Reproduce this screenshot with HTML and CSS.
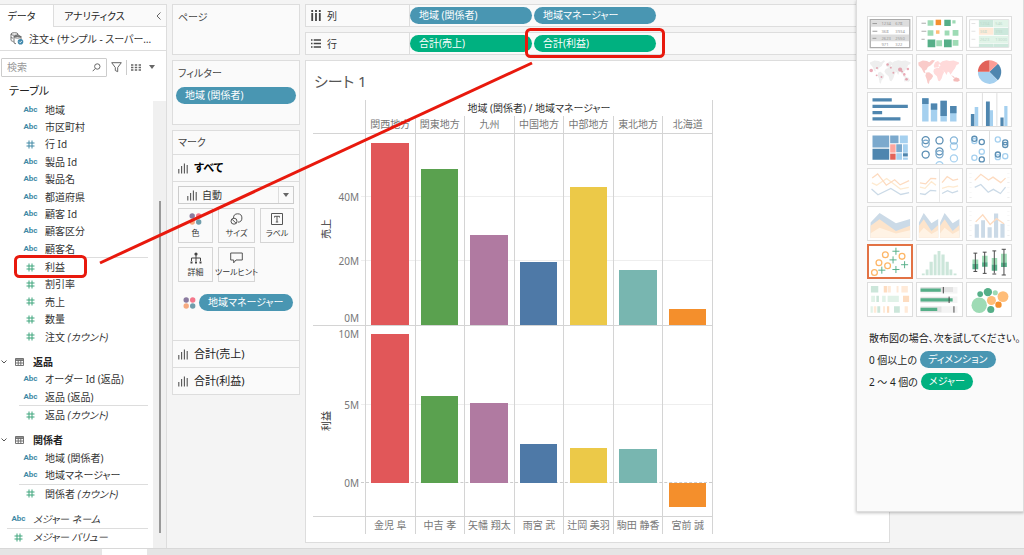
FILE: index.html
```html
<!DOCTYPE html>
<html lang="ja">
<head>
<meta charset="utf-8">
<title>シート 1</title>
<link rel="stylesheet" href="styles.css">
</head>
<body>
<svg class="defs" aria-hidden="true">
  <symbol id="hash" viewBox="0 0 9 9"><path d="M3 .5v8M6 .5v8M.5 3h8M.5 6h8" fill="none" stroke="currentColor"/></symbol>
  <symbol id="bars" viewBox="0 0 10 11"><path d="M.8 6v4.500M3.600 3v7.500M6.400 .5v10M9.200 2v8.500" fill="none" stroke="currentColor" stroke-width="1.100"/></symbol>
  <symbol id="table" viewBox="0 0 9 8"><path d="M.5 .5h8v7h-8zM.5 2.500h8M.5 5h8M3.200 2v5.500M5.800 2v5.500M.5 1.300h8" fill="none" stroke="currentColor" stroke-width=".9"/></symbol>
  <symbol id="chev" viewBox="0 0 6 4"><path d="M.5 .5L3 3 5.500 .5" fill="none" stroke="currentColor"/></symbol>
  <symbol id="dots" viewBox="0 0 13 12"><circle cx="3.200" cy="3" r="2.700" fill="#8a7a9f"/><circle cx="9.700" cy="3" r="2.700" fill="#f4778b"/><circle cx="3.200" cy="9" r="2.700" fill="#f6aa80"/><circle cx="9.700" cy="9" r="2.700" fill="#6f9dab"/></symbol>
</svg>

<div class="toolbar-edge"></div>
<div class="app">
  <aside class="data-pane">
    <div class="tabs" role="tablist">
      <button class="tab tab-active" role="tab" aria-selected="true">データ</button>
      <button class="tab tab-second" role="tab" aria-selected="false">アナリティクス</button>
      <button class="collapse" aria-label="折りたたむ"><svg width="5" height="8" viewBox="0 0 5 8"><path d="M4.500 .5L1 4l3.500 3.500" fill="none" stroke="#666"/></svg></button>
    </div>
    <div class="source">
      <svg width="14" height="13" viewBox="0 0 14 13" fill="none" stroke="#666" stroke-width=".9"><ellipse cx="4.500" cy="2" rx="3.500" ry="1.300"/><path d="M1 2v6c0 .8 1 1.300 2.500 1.400M8 2v1.500M1 5c0 .6 1 1 2 1.100"/><path d="M4 4.500h7v4M4 4.500v6.500l2 .8"/><ellipse cx="7.500" cy="4.800" rx="3.500" ry="1.300"/><circle cx="10.500" cy="9.700" r="2.800" fill="#4189ad" stroke="none"/><path d="M9.200 9.700l1 1 1.600-1.800" stroke="#fff"/></svg>
      <span>注文+ (サンプル - スーパー…</span>
    </div>
    <div class="search-row">
      <label class="search"><input type="text" placeholder="検索" aria-label="検索"><svg width="9" height="9" viewBox="0 0 9 9" fill="none" stroke="#666"><circle cx="5.300" cy="3.500" r="2.700"/><path d="M3.300 5.500L.7 8.200"/></svg></label>
      <svg width="11" height="11" viewBox="0 0 11 11" fill="none" stroke="#666"><path d="M.7 .7h9.600L6.700 5.500v4.200l-2.400-1.200v-3z"/></svg>
      <i class="divider"></i>
      <svg class="view-icon" width="10" height="7" viewBox="0 0 10 7" stroke="#666" stroke-width="1.400" stroke-dasharray="2.400 1.400"><path d="M0 1h10M0 3.500h10M0 6h10"/></svg>
      <svg width="6" height="4" viewBox="0 0 6 4"><path d="M0 0h6L3 4z" fill="#666"/></svg>
    </div>
    <h2 class="tables-title">テーブル</h2>
    <div class="tree-wrap">
      <ul class="tree">
        <li><b class="abc">Abc</b>地域</li>
        <li><b class="abc">Abc</b>市区町村</li>
        <li><svg class="hash dim"><use href="#hash"/></svg>行 Id</li>
        <li><b class="abc">Abc</b>製品 Id</li>
        <li><b class="abc">Abc</b>製品名</li>
        <li><b class="abc">Abc</b>都道府県</li>
        <li><b class="abc">Abc</b>顧客 Id</li>
        <li><b class="abc">Abc</b>顧客区分</li>
        <li><b class="abc">Abc</b>顧客名</li>
        <li class="rule"><svg class="hash"><use href="#hash"/></svg>利益</li>
        <li><svg class="hash"><use href="#hash"/></svg>割引率</li>
        <li><svg class="hash"><use href="#hash"/></svg>売上</li>
        <li><svg class="hash"><use href="#hash"/></svg>数量</li>
        <li><svg class="hash"><use href="#hash"/></svg><span>注文 <em>(カウント)</em></span></li>
        <li class="group"><svg class="chev"><use href="#chev"/></svg><svg class="tbl"><use href="#table"/></svg>返品</li>
        <li><b class="abc">Abc</b>オーダー Id (返品)</li>
        <li><b class="abc">Abc</b>返品 (返品)</li>
        <li class="rule"><svg class="hash"><use href="#hash"/></svg><span>返品 <em>(カウント)</em></span></li>
        <li class="group"><svg class="chev"><use href="#chev"/></svg><svg class="tbl"><use href="#table"/></svg>関係者</li>
        <li><b class="abc">Abc</b>地域 (関係者)</li>
        <li><b class="abc">Abc</b>地域マネージャー</li>
        <li class="rule"><svg class="hash"><use href="#hash"/></svg><span>関係者 <em>(カウント)</em></span></li>
        <li class="top first-top"><b class="abc">Abc</b><em>メジャー ネーム</em></li>
        <li class="top rule"><svg class="hash"><use href="#hash"/></svg><em>メジャー バリュー</em></li>
      </ul>
      <div class="scroll"><i></i></div>
    </div>
  </aside>

  <section class="cards">
    <div class="card pages"><h3>ページ</h3></div>
    <div class="card filters"><h3>フィルター</h3><span class="pill dim-pill">地域 (関係者)</span></div>
    <div class="card marks">
      <h3>マーク</h3>
      <div class="mark-head all"><svg class="bars"><use href="#bars"/></svg>すべて</div>
      <div class="mark-body">
        <button class="mark-type"><svg class="bars"><use href="#bars"/></svg><span>自動</span><i><svg width="6" height="4" viewBox="0 0 6 4"><path d="M0 0h6L3 4z" fill="#666"/></svg></i></button>
        <div class="mark-grid">
          <button><svg width="13" height="12"><use href="#dots"/></svg>色</button>
          <button><svg width="13" height="12" viewBox="0 0 13 12" fill="none" stroke="#555"><path d="M3.500 5a4.200 4.200 0 1 1 4.300 4.200"/><circle cx="4" cy="8.200" r="3"/><path d="M2 6.200l4 4"/></svg>サイズ</button>
          <button><svg width="12" height="12" viewBox="0 0 12 12" fill="none" stroke="#555"><path d="M.5 .5h11v11H.5zM3.500 4.500v-1.200h5v1.200M6 3.300v5.700M4.800 9h2.400"/></svg>ラベル</button>
          <button><svg width="12" height="12" viewBox="0 0 12 12" fill="none" stroke="#444"><circle cx="6" cy="2" r="1.600" fill="#444" stroke="none"/><path d="M6 3v6M1.500 9V6h9v3"/><path d="M.5 10.500h2M5 10.500h2M9.500 10.500h2" stroke-width="2"/></svg>詳細</button>
          <button><svg width="13" height="12" viewBox="0 0 13 12" fill="none" stroke="#555"><path d="M.7 1h11.600v7H6l-2.300 2.800V8h-3z"/></svg><span>ツールヒント</span></button>
        </div>
        <div class="color-row"><svg width="13" height="12"><use href="#dots"/></svg><span class="pill dim-pill">地域マネージャー</span></div>
      </div>
      <div class="mark-head"><svg class="bars"><use href="#bars"/></svg>合計(売上)</div>
      <div class="mark-head"><svg class="bars"><use href="#bars"/></svg>合計(利益)</div>
    </div>
  </section>

  <main class="work">
    <div class="shelf">
      <div class="shelf-label"><svg width="10" height="11" viewBox="0 0 10 11" fill="none" stroke="#444" stroke-width="1.800"><path d="M1.200 0v2M5 0v2M8.800 0v2M1.200 3v8M5 3v8M8.800 3v8"/></svg>列</div>
      <div class="shelf-pills"><span class="pill dim-pill">地域 (関係者)</span><span class="pill dim-pill">地域マネージャー</span></div>
    </div>
    <div class="shelf">
      <div class="shelf-label"><svg width="10" height="9" viewBox="0 0 10 9" fill="none" stroke="#444" stroke-width="1.500"><path d="M0 1h1.500M0 4.500h1.500M0 8h1.500M2.700 1H10M2.700 4.500H10M2.700 8H10"/></svg>行</div>
      <div class="shelf-pills"><span class="pill mea-pill">合計(売上)</span><span class="pill mea-pill">合計(利益)</span></div>
    </div>
    <div class="sheet">
      <h1>シート 1</h1>
      <div class="chart">
        <div class="row head-title"><span></span><div>地域 (関係者) / 地域マネージャー</div></div>
        <div class="row head"><span></span><span>関西地方</span><span>関東地方</span><span>九州</span><span>中国地方</span><span>中部地方</span><span>東北地方</span><span>北海道</span></div>
        <div class="row pane">
          <div class="axis"><span class="axis-title">売上</span><span class="tick" style="bottom:67%">40M</span><span class="tick" style="bottom:33.500%">20M</span><span class="tick tick-min">0M</span></div>
          <i class="grid-line" style="bottom:67%"></i><i class="grid-line" style="bottom:33.500%"></i>
          <div class="cell"><b class="bar red" style="bottom:0;height:95.500%"></b></div>
          <div class="cell"><b class="bar green" style="bottom:0;height:81.500%"></b></div>
          <div class="cell"><b class="bar purple" style="bottom:0;height:47%"></b></div>
          <div class="cell"><b class="bar blue" style="bottom:0;height:33%"></b></div>
          <div class="cell"><b class="bar yellow" style="bottom:0;height:72%"></b></div>
          <div class="cell"><b class="bar teal" style="bottom:0;height:28.500%"></b></div>
          <div class="cell"><b class="bar orange" style="bottom:0;height:8%"></b></div>
        </div>
        <div class="row pane">
          <div class="axis"><span class="axis-title">利益</span><span class="tick tick-max">10M</span><span class="tick" style="bottom:58.500%">5M</span><span class="tick" style="bottom:17.200%">0M</span></div>
          <i class="grid-line" style="bottom:58.500%"></i><i class="grid-line zero" style="bottom:17.200%"></i>
          <div class="cell"><b class="bar red" style="bottom:17.200%;height:78.500%"></b></div>
          <div class="cell"><b class="bar green" style="bottom:17.200%;height:46%"></b></div>
          <div class="cell"><b class="bar purple" style="bottom:17.200%;height:42%"></b></div>
          <div class="cell"><b class="bar blue" style="bottom:17.200%;height:20.500%"></b></div>
          <div class="cell"><b class="bar yellow" style="bottom:17.200%;height:18.700%"></b></div>
          <div class="cell"><b class="bar teal" style="bottom:17.200%;height:18.200%"></b></div>
          <div class="cell"><b class="bar orange" style="bottom:4.700%;height:12.500%"></b></div>
        </div>
        <div class="row foot"><span></span><span>金児 阜</span><span>中吉 孝</span><span>矢幡 翔太</span><span>雨宮 武</span><span>辻岡 美羽</span><span>駒田 静香</span><span>宮前 誠</span></div>
      </div>
    </div>
  </main>
</div>
<div class="bottom-bar"><i></i></div>

<aside class="show-me">
  <div class="thumbs">
    <button aria-label="テキスト表"><svg viewBox="37 50 138 102"><path fill="#fff" stroke="#aaa" stroke-width="4" d="M44 58h123v87H44z"/><path fill="#ddd" d="M46 60h119v20H46zM46 104h119v21H46z"/><path stroke="#999" stroke-width="3" d="M51 70h14M51 94h15M51 116h12"/><g class="mini-num"><text x="79" y="75">1234</text><text x="122" y="75">678</text><text x="79" y="98">368</text><text x="122" y="98">3934</text><text x="79" y="120">2623</text><text x="122" y="120">2550</text><text x="79" y="140">971</text><text x="122" y="140">322</text></g></svg></button>
    <button aria-label="ハイライト表"><svg viewBox="186 50 138 102"><path stroke="#aaa" stroke-width="3" d="M200 69h14M200 94h15M200 119h10"/><path fill="#55af88" d="M271 58h20v20h-20zM219 120h24v24h-24zM270 120h24v24h-24z"/><path fill="#9edbb5" d="M219 60h18v17h-18zM296 60h10v10h-10zM219 91h18v17h-18zM272 92h15v15h-15zM297 90h18v18h-18zM246 122h18v19h-18zM297 121h18v18h-18z"/><path fill="#f4902e" d="M244 58h17v17h-17z"/><path fill="#ffbd78" d="M245 91h11v11h-11z"/></svg></button>
    <button aria-label="ヒートマップ"><svg viewBox="334 50 138 102"><path fill="#fff" stroke="#ddd" stroke-width="3" d="M342 58h122v86H342z"/><path fill="#cce8dc" d="M371 59h45v22h-45zM417 83h46v23h-46zM371 133h45v10h-45zM417 133h46v10h-46z"/><path fill="#e1f4e8" d="M417 59h46v22h-46zM371 108h92v23h-92z"/><path fill="#ffead8" d="M371 83h45v22h-45z"/><path stroke="#e2e2e2" stroke-width="3" d="M348 70h12M348 94h12M348 119h12"/><g class="mini-num faint"><text x="374" y="74">1234</text><text x="422" y="74">546</text><text x="374" y="98">368</text><text x="422" y="98">393</text><text x="374" y="123">2623</text><text x="422" y="123">13000</text></g></svg></button>

    <button aria-label="記号マップ"><svg viewBox="37 164 138 102"><g fill="#eee"><path id="world" d="M43 187l14-6 13 1 7 4 9-6 4 3-7 7-3 8-8 5-4 8-3-4-6 1 3 7-6-3-5-12-8-9zM69 218l7-2 8 7 4 5-3 8-6 7-2 10-4-3-2-13-4-10zM93 197l5-9 8-5 6 3 4 6-8 4 3 5-5 2-9-1zM92 207l10-4 12 2 5 8 5 3-5 10-3 10-6 9-5-1-4-14-8-7-5-8zM110 190l9-7 13-3 9 2 13-1 16 6-1 5-7 3-5 11-5 6-5 8-4 5-3-7-5-3-4 11-5-9-6-5-5 2-5-6-3-7 5-4zM147 226l6 3 6 5-5 1-7-4zM149 238l6-4 8 0 5 8-4 5-7-2-7 1zM172 243l2 2-3 4z"/></g><g fill="#dc7185" fill-opacity=".6"><circle cx="47" cy="212" r="5.500"/><circle cx="65" cy="204" r="3"/><circle cx="64" cy="227" r="3"/><circle cx="79" cy="232" r="3"/><circle cx="98" cy="193" r="4"/><circle cx="108" cy="203" r="3"/><circle cx="116" cy="219" r="3"/><circle cx="137" cy="209" r="6.500"/><circle cx="143" cy="215" r="3"/><circle cx="150" cy="224" r="4"/><circle cx="157" cy="239" r="4"/><circle cx="161" cy="207" r="4"/></g></svg></button>
    <button aria-label="マップ"><svg viewBox="186 164 138 102"><g fill="#f9cbc9"><path d="M190 187l14-6 13 1 7 4 9-7 9 2-9 11-5 4-8 5-4 8-6 4 3 8-6-3-7-13-9-9zM215 218l9-1 10 8 2 5-5 8-6 6-2 10-4-3-3-13-4-10z"/></g><g fill="#ffdada"><path d="M238 197l4-10 8-5 5 3 3 6-6 4 4 4-6 3-10 1zM239 207l10-4 12 2 5 8 5 3-5 10-3 10-6 9-5-1-4-14-8-7-3-8zM256 190l9-7 13-3 9 2 13-1 17 6-1 5-7 3-5 11-5 6-5 8-4 5-3-7-5-3-4 11-5-9-6-5-5 2-5-6-3-7 5-4z"/></g><path d="M292 226l12 7-3 2zM299 239l8-6 10 4 2 7-7 3-12-2z" fill="#f4bbb9"/></svg></button>
    <button aria-label="円グラフ"><svg viewBox="334 164 138 102"><path fill="#a5d0ef" d="M404 216l25 27a36 36 0 0 1-61-27z"/><path fill="#4f86af" d="M404 216l26-25a36 36 0 0 1 0 51z"/><path fill="#fc9d96" d="M404 216v-36a36 36 0 0 1 26 11z"/><path fill="#e26259" d="M404 216h-36a36 36 0 0 1 36-36z"/></svg></button>

    <button aria-label="横棒"><svg viewBox="37 278 138 102"><path fill="#4f86af" d="M51 294h60v10H51zM51 314h110v10H51zM51 334h30v10H51zM51 353h87v10H51z"/></svg></button>
    <button aria-label="積み上げ棒"><svg viewBox="186 278 138 102"><path fill="#a5d0ef" d="M202 294h20v72h-20zM229 310h20v56h-20zM259 302h20v64h-20zM289 318h20v48h-20z"/><path fill="#4f86af" d="M202 294h20v18h-20zM229 310h20v20h-20zM259 302h20v47h-20zM289 318h20v23h-20z"/></svg></button>
    <button aria-label="並列棒"><svg viewBox="334 278 138 102"><path stroke="#ccc" stroke-width="2" d="M382 278v102M427 278v102"/><path fill="#a5d0ef" d="M358 321h11v59h-11zM405 331h10v49h-10zM450 318h10v62h-10z"/><path fill="#4f86af" d="M346 343h11v37h-11zM393 304h12v76h-12zM438 354h10v26h-10z"/></svg></button>

    <button aria-label="ツリーマップ"><svg viewBox="37 16 138 102"><path fill="#7ba9cd" d="M51 30h52v37H51zM106 30h26v24h-26zM125 57h18v25h-18z"/><path fill="#4f86af" d="M51 71h52v34H51zM146 85h15v10h-15z"/><path fill="#a5d0ef" d="M136 30h25v24h-25zM146 57h15v26h-15zM125 85h18v20h-18zM146 98h15v7h-15z"/><path fill="#ffa69e" d="M106 57h17v26h-17z"/><path fill="#e26259" d="M106 86h17v19h-17z"/></svg></button>
    <button aria-label="円ビュー"><svg viewBox="186 16 138 102" fill="none" stroke="#5c8fb4" stroke-width="4"><circle cx="213" cy="44" r="11"/><circle cx="213" cy="55" r="11" stroke="#79a8cb"/><circle cx="213" cy="89" r="11"/><circle cx="256" cy="45" r="11"/><circle cx="256" cy="79" r="11"/><circle cx="256" cy="88" r="11" stroke="#79a8cb"/><g stroke="#a5d0ef"><circle cx="256" cy="122" r="11"/><circle cx="301" cy="63" r="11"/><circle cx="301" cy="101" r="11"/></g><circle cx="301" cy="45" r="11" stroke="#86b6d9"/></svg></button>
    <button aria-label="並列円"><svg viewBox="334 16 138 102" fill="none" stroke="#5c8fb4" stroke-width="4"><path stroke="#ccc" stroke-width="2" d="M404 16v102"/><g stroke="#a5d0ef"><circle cx="357" cy="47" r="8"/><circle cx="380" cy="80" r="8"/><circle cx="357" cy="99" r="8"/><circle cx="430" cy="42" r="8"/><circle cx="453" cy="94" r="8"/><circle cx="430" cy="97" r="8"/></g><circle cx="357" cy="40" r="8"/><circle cx="380" cy="50" r="8"/><circle cx="380" cy="104" r="8"/><circle cx="453" cy="51" r="8"/><circle cx="453" cy="59" r="8"/><circle cx="430" cy="89" r="8"/></svg></button>

    <button aria-label="線 (連続)"><svg viewBox="37 130 138 102" fill="none" stroke-width="4"><path stroke="#feead0" d="M49 173l15 7 31-21 43 33 26-5"/><path stroke="#fddbc0" d="M50 158l17-13 27 35 26-17 17 16 28-13"/><path stroke="#cbdae7" d="M48 192l20 18 40-20 31 19 26-6"/></svg></button>
    <button aria-label="線 (不連続)"><svg viewBox="186 130 138 102" fill="none" stroke-width="4"><path stroke="#ddd" stroke-width="2" d="M256 130v102"/><path stroke="#feead0" d="M195 186l16 4 20-21 14 11M264 190l20-6 15 2 15-4"/><path stroke="#fddbc0" d="M195 173l18 3 16-17 17 1M264 172l16-19 18 12 16-4"/><path stroke="#cbdae7" d="M195 206l16 3 17-13 18 2M264 206l17-9 15 7 18-6"/></svg></button>
    <button aria-label="二重線"><svg viewBox="334 130 138 102" fill="none" stroke-width="4"><path stroke="#ddd" stroke-width="7" stroke-dasharray="1 14" d="M345 142v78M463 142v78"/><path stroke="#fddbc0" d="M358 165l19-19 24 18 14-9 24 17 15-14"/><path stroke="#cbdae7" d="M358 187l19-9 23 24 16-9 22 13 16-20"/></svg></button>

    <button aria-label="面グラフ (連続)"><svg viewBox="37 244 138 102"><path fill="#cbdae7" d="M45 292l28-30 51 32 44-13v58H45z"/><path fill="#fde4cb" d="M45 302l28-20 51 36 44-16v37H45z"/><path fill="#fff3e5" d="M45 325l28-17 51 18 44-10v23H45z"/></svg></button>
    <button aria-label="面グラフ (不連続)"><svg viewBox="186 244 138 102"><path fill="#cbdae7" d="M192 292l15-30 24 32 21-13v58h-60zM258 292l14-30 25 32 21-13v58h-60z"/><path fill="#fde4cb" d="M192 302l15-20 24 36 21-18v39h-60zM258 302l14-20 25 36 21-18v39h-60z"/><path fill="#fff3e5" d="M192 325l15-17 24 20 21-12v23h-60zM258 325l14-17 25 20 21-12v23h-60z"/></svg></button>
    <button aria-label="二重組み合わせ"><svg viewBox="334 244 138 102"><path stroke="#ddd" stroke-width="7" stroke-dasharray="1 14" d="M345 256v84M463 256v84"/><path fill="#cbdae7" d="M358 297h13v42h-13zM378 285h12v54h-12zM398 307h13v32h-13zM418 264h13v75h-13zM438 296h13v43h-13z"/><path fill="none" stroke="#fddbc0" stroke-width="4" d="M361 290l22-22 23 30 20-18 23 16"/></svg></button>

    <button class="chosen" aria-label="散布図"><svg viewBox="40 15 132 96" fill="none" stroke-width="4"><g stroke="#fdb667"><circle cx="91" cy="42" r="9"/><circle cx="143" cy="47" r="9"/><circle cx="71" cy="67" r="9"/><circle cx="98" cy="76" r="9"/><circle cx="57" cy="97" r="9"/></g><path stroke="#55af88" stroke-width="3" d="M113 31h22M124 20v22M104 58h22M115 47v22M140 73h22M151 62v22M113 88h22M124 77v22M69 90h22M80 79v22"/></svg></button>
    <button aria-label="ヒストグラム"><svg viewBox="186 12 138 102"><path fill="#cce6da" d="M201 100h9v6h-9zM213 88h9v18h-9zM225 64h10v42h-10zM238 41h9v65h-9zM250 30h9v76h-9zM262 41h10v65h-10zM275 64h10v42h-10zM287 88h9v18h-9zM300 100h9v6h-9z"/></svg></button>
    <button aria-label="箱ヒゲ図"><svg viewBox="334 12 138 102"><path fill="#9edbb5" d="M351 57h18v13h-18zM381 45h17v20h-17zM411 52h17v20h-17zM440 39h18v29h-18z"/><path fill="#55af88" d="M351 70h18v17h-18zM381 65h17v14h-17zM411 72h17v20h-17zM440 67h18v13h-18z"/><path fill="none" stroke="#444" stroke-width="3" d="M360 37v57M354 37h12M354 94h12M389 34v66M383 34h12M383 100h12M419 30v70M413 30h12M413 102h12M449 25v80M442 25h13M442 105h13"/></svg></button>

    <button aria-label="ガントチャート"><svg viewBox="37 126 138 102"><path fill="#cce6da" d="M46 135h23v20H46zM63 165h8v20h-8zM118 198h18v20h-18zM66 198h9v20h-9z"/><path fill="#e1f2e8" d="M47 165h12v20H47zM81 165h11v20H81zM98 165h35v20H98zM45 198h7v20h-7z"/><path fill="#fddcc0" d="M86 135h10v20H86zM146 165h19v20h-19zM96 198h7v20h-7z"/><path fill="#ffead8" d="M98 135h10v20H98zM126 135h6v20h-6zM141 135h20v20h-20zM55 198h8v20h-8zM84 198h6v20h-6zM151 198h10v20h-10z"/></svg></button>
    <button aria-label="ブレットグラフ"><svg viewBox="186 126 138 102"><path fill="#f4f4f4" d="M197 138h115v20H197zM197 168h115v20H197zM197 198h115v20H197z"/><path fill="#e3e3e3" d="M197 138h101v16H197zM197 169h88v18H197zM197 199h65v18H197z"/><path fill="#55af88" d="M197 143h63v10h-63zM197 173h100v10H197zM197 203h52v10h-52z"/><path stroke="#444" stroke-width="3" d="M268 138v20M286 168v20M301 198v20"/></svg></button>
    <button aria-label="パックバブル"><svg viewBox="334 126 138 102"><circle cx="372" cy="195" r="24" fill="#9edbb5"/><g fill="#55af88"><circle cx="375" cy="160" r="9"/><circle cx="399" cy="154" r="13"/><circle cx="408" cy="208" r="11"/></g><circle cx="422" cy="156" r="8" fill="#9edbb5"/><g fill="#ffbd78"><circle cx="410" cy="180" r="14"/><circle cx="446" cy="168" r="17"/></g><circle cx="432" cy="193" r="10" fill="#f4902e"/></svg></button>
  </div>
  <p>散布図の場合、次を試してください。</p>
  <p>0 個以上の <span class="pill dim-pill">ディメンション</span></p>
  <p>2 ～ 4 個の <span class="pill mea-pill">メジャー</span></p>
</aside>

<svg class="callouts" width="680" height="290" viewBox="0 0 680 290" fill="none" stroke="#e8190d" stroke-width="3" aria-hidden="true"><rect x="15.500" y="256.500" width="70" height="20" rx="4"/><rect x="526.500" y="29.500" width="137" height="27" rx="4"/><path d="M100 263L532 63"/></svg>
</body>
</html>
```
FILE: styles.css
```css
* { box-sizing: border-box; }
body {
  margin: 0;
  min-height: 100vh;
  position: relative;
  display: flex;
  flex-direction: column;
  background: #f4f4f4;
  color: #333;
  font: 10px/16px "Noto Sans", "Noto Sans CJK JP", sans-serif;
  font-feature-settings: "palt";
}
h1, h2, h3, p, ul { margin: 0; padding: 0; font-weight: normal; }
svg { display: block; flex: none; }
button, input { font: inherit; font-feature-settings: inherit; color: inherit; padding: 0; margin: 0; }
.defs { position: absolute; width: 0; height: 0; }

.toolbar-edge { height: 4px; background: #f4f4f4; }
.app { flex: 1; display: flex; gap: 5px; min-height: 0; }
.bottom-bar { height: 7px; background: #e5e5e5; border-top: 1px solid #d8d8d8; }
.bottom-bar i { display: block; width: 45px; height: 6px; margin-left: 102px; background: #fff; }

/* data pane */
.data-pane { width: 167px; flex: none; display: flex; flex-direction: column; background: #fff; border: 1px solid #ddd; border-width: 1px 1px 0 0; }
.tabs { display: flex; height: 22px; background: #fafafa; border-bottom: 1px solid #ddd; }
.tab { border: 0; background: none; font-size: 10px; color: #222; }
.tab-active { width: 54px; height: 22px; background: #fff; border-right: 1px solid #ddd; padding-right: 10px; }
.tab-second { padding-left: 10px; }
.collapse { margin-left: auto; border: 0; background: none; padding: 0 5px; }
.source { display: flex; align-items: center; gap: 5px; height: 24px; padding-left: 10px; border-bottom: 1px solid #ddd; white-space: nowrap; overflow: hidden; }
.search-row { display: flex; align-items: center; gap: 4px; height: 32px; padding-left: 1px; }
.search { display: flex; align-items: center; width: 106px; height: 19px; padding: 0 5px; border: 1px solid #ccc; border-radius: 1px; }
.search input { flex: 1; min-width: 0; border: 0; outline: 0; background: none; }
.search input::placeholder { color: #999; opacity: 1; }
.divider { width: 1px; height: 15px; background: #ccc; }
.view-icon { margin-right: 4px; }
.tables-title { height: 18px; padding-left: 9px; font-size: 11px; line-height: 16px; color: #222; }
.tree-wrap { flex: 1; display: flex; }
.tree { flex: 1; display: flex; flex-direction: column; list-style: none; padding-bottom: 2px; }
.tree li { position: relative; flex: 1 1 17px; display: flex; align-items: center; gap: 7px; padding-left: 23px; white-space: nowrap; }
.tree li.rule { margin-top: 1px; }
.tree li.rule::before { content: ""; position: absolute; top: -1px; left: 19px; right: 5px; height: 1px; background: #ddd; }
.tree li.top { padding-left: 11px; }
.tree li.top.rule::before { left: 7px; }
.tree li.group { margin-top: 8px; padding-left: 1px; font-weight: bold; gap: 8px; color: #222; }
.tree li.first-top { margin-top: 8px; }
.abc { width: 15px; color: #4189a5; font: bold 8px/16px Roboto, sans-serif; text-align: center; }
.hash { width: 9px; height: 9px; margin: 0 3px; color: #3ea57c; }
.hash.dim { color: #4189a5; }
.chev { width: 6px; height: 4px; color: #555; }
.tbl { width: 9px; height: 8px; margin-right: 1px; color: #666; }
.scroll { width: 13px; background: #f0f0f0; padding: 100px 0 15px 6px; display: flex; }
.scroll i { width: 2px; background: #999; }

/* cards */
.cards { width: 128px; flex: none; display: flex; flex-direction: column; gap: 5px; }
.card { background: #fafafa; border: 1px solid #ddd; }
.card h3 { padding: 0 5px; font-size: 10px; line-height: 24px; color: #444; }
.pages { height: 51px; }
.filters { height: 65px; }
.pill { display: inline-block; height: 17px; padding: 0 9px; border-radius: 9px; color: #fff; font-size: 10px; line-height: 17px; white-space: nowrap; }
.dim-pill { background: #4996b2; }
.mea-pill { background: #00b180; }
.filters .pill { display: block; margin: 2px 3px; }
.marks h3 { line-height: 23px; }
.mark-head { display: flex; align-items: center; gap: 6px; height: 27px; padding-left: 5px; border-top: 1px solid #ddd; font-size: 11px; color: #222; }
.mark-head.all { font-weight: bold; color: #000; }
.bars { width: 10px; height: 11px; color: #555; }
.mark-body { border-top: 1px solid #ddd; padding: 4px 5px 29px; }
.mark-type { display: flex; align-items: center; gap: 5px; width: 100%; height: 18px; padding-left: 8px; border: 1px solid #ccc; background: #fafafa; text-align: left; }
.mark-type span { flex: 1; }
.mark-type i { display: flex; align-items: center; justify-content: center; width: 15px; height: 16px; border-left: 1px solid #ddd; }
.mark-grid { display: grid; grid-template-columns: 35px 37px 34px; justify-content: space-between; gap: 4px 0; padding-top: 4px; }
.mark-grid button { display: flex; flex-direction: column; align-items: center; justify-content: center; gap: 1px; height: 35px; border: 1px solid #d5d5d5; background: #fafafa; font-size: 8px; line-height: 14px; white-space: nowrap; padding-top: 2px; }
.color-row { display: flex; align-items: center; gap: 3px; padding: 12px 4px 0 5px; }
.color-row .pill { flex: 1; }

/* shelves and sheet */
.work { flex: 1; min-width: 0; display: flex; flex-direction: column; gap: 5px; padding-bottom: 5px; }
.shelf { display: flex; height: 23px; background: #fafafa; border: 1px solid #ddd; border-right: 0; }
.shelf-label { display: flex; align-items: center; gap: 6px; width: 104px; padding-left: 5px; border-right: 1px solid #ddd; }
.shelf-pills { display: flex; align-items: center; gap: 2px; }
.shelf-pills .pill { width: 122px; }
.sheet { flex: 1; display: flex; flex-direction: column; margin-right: 134px; padding: 8px 7px; background: #fff; border: 1px solid #ddd; }
.sheet h1 { height: 31px; padding-left: 1px; font-size: 15px; line-height: 24px; color: #555; }
.chart { flex: 1; display: flex; flex-direction: column; width: 100%; max-width: 400px; color: #777; }
.row { position: relative; display: grid; grid-template-columns: 52px repeat(7, 1fr); border-right: 1px solid #d4d4d4; }
.head-title div { grid-column: 2 / -1; height: 16px; text-align: center; color: #333; border-left: 1px solid #d4d4d4; }
.head, .foot { height: 18px; text-align: center; line-height: 17px; white-space: nowrap; }
.head { border-bottom: 1px solid #d4d4d4; }
.foot { height: 17px; }
.head > * + *, .foot > * + *, .cell { border-left: 1px solid #d4d4d4; }
.pane { flex: 1; border-bottom: 1px solid #d4d4d4; }
.axis, .cell { position: relative; }
.axis-title { position: absolute; left: 5px; top: 50%; writing-mode: vertical-rl; text-orientation: sideways; transform: translateY(-50%) rotate(180deg); color: #333; }
.tick { position: absolute; right: 6px; transform: translateY(50%); }
.tick-min { bottom: -1px; transform: none; }
.tick-max { top: 0; transform: none; }
.grid-line { position: absolute; left: 48px; right: 0; height: 1px; background: #eee; }
.grid-line.zero { background: none; border-top: 1px dashed #ccc; }
.bar { position: absolute; left: 11%; right: 12%; }
.red { background: #e15759; }
.green { background: #5aa14f; }
.purple { background: #b07aa1; }
.blue { background: #4e79a7; }
.yellow { background: #ecc948; }
.teal { background: #78b6b0; }
.orange { background: #f48f2c; }

/* floating chart chooser */
.show-me { position: absolute; top: 0; right: 0; width: 168px; height: 512px; padding: 16px 11px 16px 10px; background: #fafafa; border: 1px solid #ddd; border-top: 0; box-shadow: 0 1px 3px rgba(0, 0, 0, .25); color: #222; }
.thumbs { display: grid; grid-template-columns: repeat(3, 1fr); gap: 3px; margin-bottom: 12px; }
.thumbs button { height: 35px; border: 1px solid #ddd; background: #fff; overflow: hidden; }
.thumbs svg { width: 100%; height: 100%; }
.thumbs .chosen { border: 2px solid #e27244; }
.mini-num { font-size: 13px; fill: #999; }
.mini-num.faint { fill: #bcd8cb; }
.show-me p { display: flex; align-items: center; gap: 3px; height: 17px; margin: 0 0 5px 2px; white-space: nowrap; }
.show-me p .pill { padding: 0 8px; }

.callouts { position: absolute; left: 0; top: 0; pointer-events: none; }
```
